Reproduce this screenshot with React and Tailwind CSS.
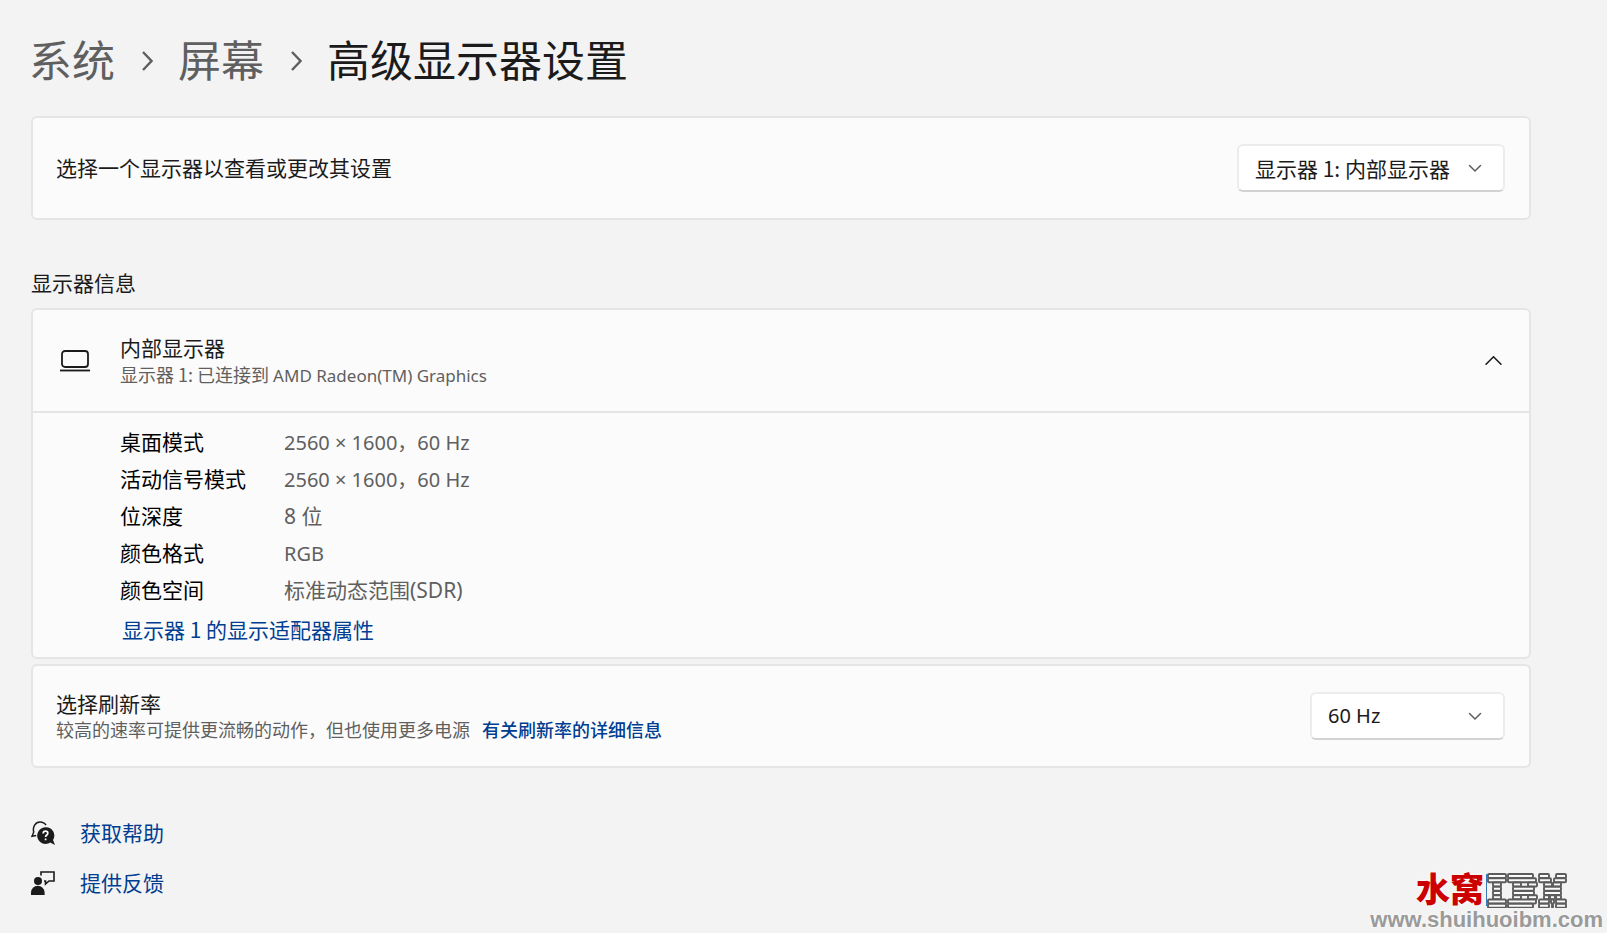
import { useState } from 'react'

const DETAILS = [
  { label: '桌面模式', value: '2560 × 1600，60 Hz', latin: true },
  { label: '活动信号模式', value: '2560 × 1600，60 Hz', latin: true },
  { label: '位深度', value: '8 位' },
  { label: '颜色格式', value: 'RGB', latin: true },
  { label: '颜色空间', value: '标准动态范围(SDR)' },
]

// [x, width] of the bars in each of the eight rows of the striped logo
const LOGO_ROWS = [
  [[1, 18], [21, 25], [52, 10], [69, 10]],
  [[1, 18], [21, 28], [52, 12], [67, 12]],
  [[6, 8], [26, 8], [41, 9], [57, 8], [66, 8]],
  [[6, 8], [26, 21], [57, 17]],
  [[6, 8], [26, 21], [57, 17]],
  [[6, 8], [26, 8], [41, 9], [57, 5], [63, 5], [69, 5]],
  [[1, 18], [21, 28], [52, 10], [64, 3], [69, 10]],
  [[1, 18], [21, 25], [52, 10], [65, 1], [69, 10]],
]

function Chevron({ className, size = 16, up = false }) {
  return (
    <svg width={size} height={size} viewBox="0 0 16 16" fill="none" stroke="currentColor" strokeWidth="1.5" strokeLinecap="round" className={className} aria-hidden="true">
      <path d={up ? 'M1 11.5 8 4.5l7 7' : 'M2.5 5.5l5.5 5.5 5.5-5.5'} />
    </svg>
  )
}

function Crumb({ children }) {
  return (
    <li className="flex items-center">
      <a href="#" className="text-[#5f5f5f]">{children}</a>
      <svg width="11" height="20" viewBox="0 0 11 20" fill="none" stroke="#5f5f5f" strokeWidth="2.4" className="ml-[27px] mr-[25px]" aria-hidden="true">
        <path d="M1 1 9.5 10 1 19" />
      </svg>
    </li>
  )
}

function Select({ label, options, className }) {
  return (
    <div className={`relative shrink-0 ${className}`}>
      <select
        aria-label={label}
        className="block h-12 w-full appearance-none rounded-md border-2 border-[#ececec] border-b-[#d2d2d2] bg-white pl-4 pr-12 text-[#1b1b1b]"
      >
        {options.map((o) => (
          <option key={o}>{o}</option>
        ))}
      </select>
      <Chevron className="pointer-events-none absolute right-[22px] top-4 text-[#5d5d5d]" />
    </div>
  )
}

function HelpIcon() {
  return (
    <svg width="24" height="24" viewBox="0 0 24 24" fill="none" aria-hidden="true">
      <path d="M2.8 11.5C1.2 5.8 4.5 1 9 1c2.8 0 4.8 1.2 6 3.2M2.8 11 1 15.2l4.2-.7" stroke="#1b1b1b" strokeWidth="1.5" />
      <path d="M14.5 6.3a8.3 8.3 0 1 0 4.600 15.200L24 24l-2-5a8.300 8.300 0 0 0-7.500-12.700z" fill="#1b1b1b" />
      <path d="M12.2 12.4c0-3 4.6-2.8 4.6-.2 0 1.8-2.2 1.8-2.2 3.8M14.6 17.4v1.8" stroke="#fff" strokeWidth="1.7" />
    </svg>
  )
}

function FeedbackIcon() {
  return (
    <svg width="24" height="24" viewBox="0 0 24 24" aria-hidden="true">
      <circle cx="7" cy="10" r="4" fill="#1b1b1b" />
      <path d="M0 24v-2.5a6.8 6.8 0 0 1 13.6 0V24z" fill="#1b1b1b" />
      <path d="M10 4.5V1h13v9h-5l-3.5 3v-3H13" fill="none" stroke="#1b1b1b" strokeWidth="1.6" />
    </svg>
  )
}

function Watermark() {
  return (
    <div className="pointer-events-none absolute bottom-px right-1 flex flex-col items-end font-['Liberation_Sans','Noto_Sans_CJK_SC',sans-serif] font-bold">
      <div className="mr-9 flex h-9 items-center">
        <span className="text-[34px] font-black leading-9 text-[#cc0000] [text-shadow:0_0_3px_#fff]">水窝</span>
        <span className="ml-[2px] h-8 w-px bg-[#3a78b5]" />
        <svg width="80" height="35" viewBox="0 0 80 35" fill="#fafafa" stroke="#5c5c5c" strokeWidth="1.9" role="img" aria-label="IBM">
          {LOGO_ROWS.map((row, i) =>
            row.map(([x, w]) => (
              <rect key={`${i}-${x}`} x={x} y={1 + i * 4.25} width={w} height="4" rx="1" />
            ))
          )}
        </svg>
      </div>
      <span className="text-[22px] leading-6 text-[#9a9a9a] [text-shadow:0_0_3px_#fff]">www.shuihuoibm.com</span>
    </div>
  )
}

export default function App() {
  const [open, setOpen] = useState(true)

  return (
    <div className="relative min-h-screen bg-[#f3f3f3] pl-[31px] pr-19 pt-8 font-['Noto_Sans','Noto_Sans_CJK_SC',sans-serif] text-[21px] leading-7 text-[#1b1b1b]">
      <nav aria-label="位置" className="-ml-[2px]">
        <ol className="flex items-center text-[43px] leading-[57px]">
          <Crumb>系统</Crumb>
          <Crumb>屏幕</Crumb>
          <li>
            <h1>高级显示器设置</h1>
          </li>
        </ol>
      </nav>

      <main>
        <section className="mt-[27px] flex h-[104px] items-center justify-between rounded-md border-2 border-[#e5e5e5] bg-[#fbfbfb] pl-[23px] pr-6">
          <p>选择一个显示器以查看或更改其设置</p>
          <Select
            label="选择显示器"
            options={['显示器 1: 内部显示器']}
            className="w-[268px] font-['Noto_Sans_CJK_SC',sans-serif]"
          />
        </section>

        <h2 className="mt-[49px]">显示器信息</h2>
        <section className="mt-[11px] rounded-md border-2 border-[#e5e5e5] bg-[#fbfbfb]">
          <button
            type="button"
            aria-expanded={open}
            onClick={() => setOpen(!open)}
            className="flex h-[101px] w-full items-center pl-[27px] pr-[27px] text-left"
          >
            <svg width="30" height="22" viewBox="0 0 30 22" fill="none" stroke="#1b1b1b" strokeWidth="1.8" aria-hidden="true">
              <rect x="2" y="1" width="26" height="16" rx="3" />
              <path d="M0 20.5h30" />
            </svg>
            <span className="ml-[30px] flex-1">
              <span className="block leading-7">内部显示器</span>
              <span className="block font-['Noto_Sans_CJK_SC',sans-serif] text-[18px] leading-6 text-[#5f5f5f]">
                显示器 1: 已连接到{' '}
                <span className="font-['Noto_Sans',sans-serif] text-[17px]">AMD Radeon(TM) Graphics</span>
              </span>
            </span>
            <Chevron up={open} size={17} />
          </button>
          {open && (
            <div className="border-t-2 border-[#e5e5e5] pb-3 pl-[87px] pt-[11px]">
              <dl className="grid grid-cols-[164px_1fr] leading-[37px]">
                {DETAILS.map((d) => (
                  <div key={d.label} className="contents">
                    <dt className="text-black">{d.label}</dt>
                    <dd className={`text-[#5f5f5f] ${d.latin ? 'text-[20px]' : ''}`}>{d.value}</dd>
                  </div>
                ))}
              </dl>
              <a href="#" className="mt-1 block pl-[2px] font-['Noto_Sans_CJK_SC',sans-serif] leading-8 text-[#003e92]">
                显示器 1 的显示适配器属性
              </a>
            </div>
          )}
        </section>

        <section className="mt-[5px] flex h-[104px] items-center justify-between rounded-md border-2 border-[#e5e5e5] bg-[#fbfbfb] pl-[23px] pr-6">
          <div>
            <h3>选择刷新率</h3>
            <p className="text-[18px] leading-6 text-[#5f5f5f]">
              较高的速率可提供更流畅的动作，但也使用更多电源
              <a href="#" className="ml-3 font-medium text-[#003e92]">有关刷新率的详细信息</a>
            </p>
          </div>
          <Select label="选择刷新率" options={['60 Hz']} className="w-[195px] text-[20px]" />
        </section>
      </main>

      <footer className="mt-[45px] flex flex-col items-start gap-[10px] text-[#003e92]">
        <a href="#" className="flex h-10 items-center gap-[25px]">
          <HelpIcon />
          获取帮助
        </a>
        <a href="#" className="flex h-10 items-center gap-[25px]">
          <FeedbackIcon />
          提供反馈
        </a>
      </footer>

      <Watermark />
    </div>
  )
}
